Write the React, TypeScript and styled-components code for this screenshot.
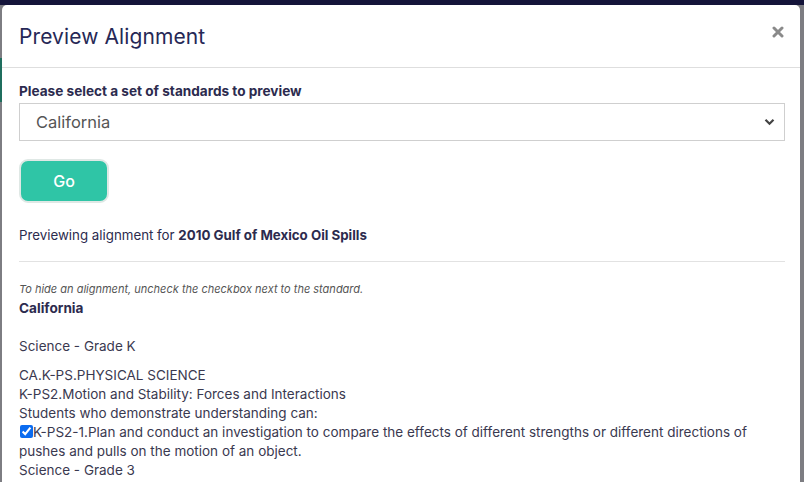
import React from "react";
import styled, { createGlobalStyle } from "styled-components";

const GlobalStyle = createGlobalStyle`
  html, body {
    margin: 0;
    padding: 0;
    height: 100%;
    overflow: hidden;
  }
  body {
    font-family: "Inter", "Noto Sans", sans-serif;
    background: #7b7b80;
  }
`;

const Backdrop = styled.div`
  height: 482px;
  display: flex;
  flex-direction: column;
  background: #7d7d82;
  position: relative;
`;

const TopStrip = styled.div`
  height: 5px;
  background: #14143a;
  flex-shrink: 0;
`;

const SideAccent = styled.div`
  position: absolute;
  left: 0;
  top: 58px;
  width: 2px;
  height: 44px;
  background: #1f6e5e;
`;

const Modal = styled.div`
  margin: 0 4px 0 2px;
  flex: 1;
  background: #fff;
  border-radius: 5px 5px 0 0;
  overflow: hidden;
  display: flex;
  flex-direction: column;
  color: #2c2b4e;
`;

const Header = styled.div`
  height: 62px;
  display: flex;
  align-items: center;
  justify-content: space-between;
  padding: 0 16px 0 17px;
  border-bottom: 1px solid #dedede;
  flex-shrink: 0;
`;

const Title = styled.h2`
  margin: 0;
  font-size: 21px;
  font-weight: 400;
  color: #262856;
  letter-spacing: 0.1px;
`;

const Close = styled.button`
  border: 0;
  background: none;
  padding: 0;
  display: flex;
  margin-top: -8px;
`;

const Body = styled.div`
  padding: 15px 15px 0 17px;
  display: flex;
  flex-direction: column;
`;

const Label = styled.label`
  font-size: 13.6px;
  font-weight: 700;
  color: #2c2b4e;
  margin-bottom: 4px;
`;

const SelectBox = styled.div`
  height: 36px;
  border: 1px solid #cfcfcf;
  display: flex;
  align-items: center;
  justify-content: space-between;
  padding: 0 9px 0 16px;
  font-size: 16.5px;
  color: #555;
`;

const Go = styled.button`
  margin-top: 18px;
  align-self: flex-start;
  width: 90px;
  height: 44px;
  border-radius: 9px;
  background: #2fc5a6;
  border: 2px solid #dfe8e5;
  color: #fff;
  font-size: 16px;
  font-weight: 500;
  font-family: "Inter", sans-serif;
`;

const Previewing = styled.p`
  margin: 24px 0 0 0;
  font-size: 13.3px;
  color: #2c2b4e;
  strong {
    font-weight: 700;
  }
`;

const Rule = styled.hr`
  border: 0;
  border-top: 1px solid #e2e2e2;
  margin: 18px 0 0 0;
`;

const Hint = styled.p`
  margin: 20px 0 0 0;
  font-size: 11px;
  font-style: italic;
  color: #555;
`;

const StateName = styled.div`
  font-size: 13.6px;
  font-weight: 700;
  margin-top: 4px;
`;

const Line = styled.div<{ $gap?: number }>`
  font-size: 13.5px;
  line-height: 19px;
  color: #3a3950;
  margin-top: ${(p) => p.$gap ?? 0}px;
`;

const Check = styled.input`
  width: 13px;
  height: 13px;
  margin: 0 0 0 1px;
  vertical-align: -1px;
  accent-color: #0b6cf0;
`;

export default function App() {
  return (
    <>
      <GlobalStyle />
      <Backdrop>
        <TopStrip />
        <SideAccent />
        <Modal>
          <Header>
            <Title>Preview Alignment</Title>
            <Close aria-label="Close">
              <svg width="12" height="12" viewBox="0 0 12 12">
                <path d="M2 2 L10 10 M10 2 L2 10" stroke="#8a8a8a" strokeWidth="3" strokeLinecap="round" />
              </svg>
            </Close>
          </Header>
          <Body>
            <Label>Please select a set of standards to preview</Label>
            <SelectBox>
              <span>California</span>
              <svg width="11" height="8" viewBox="0 0 11 8">
                <path d="M1.5 1.8 L5.5 5.8 L9.5 1.8" fill="none" stroke="#444" strokeWidth="2.2" />
              </svg>
            </SelectBox>
            <Go>Go</Go>
            <Previewing>
              Previewing alignment for <strong>2010 Gulf of Mexico Oil Spills</strong>
            </Previewing>
            <Rule />
            <Hint>To hide an alignment, uncheck the checkbox next to the standard.</Hint>
            <StateName>California</StateName>
            <Line $gap={21}>Science - Grade K</Line>
            <Line $gap={10}>CA.K-PS.PHYSICAL SCIENCE</Line>
            <Line>K-PS2.Motion and Stability: Forces and Interactions</Line>
            <Line>Students who demonstrate understanding can:</Line>
            <Line>
              <Check type="checkbox" defaultChecked />
              K-PS2-1.Plan and conduct an investigation to compare the effects of different strengths or different directions of pushes and pulls on the motion of an object.
            </Line>
            <Line>Science - Grade 3</Line>
          </Body>
        </Modal>
      </Backdrop>
    </>
  );
}
